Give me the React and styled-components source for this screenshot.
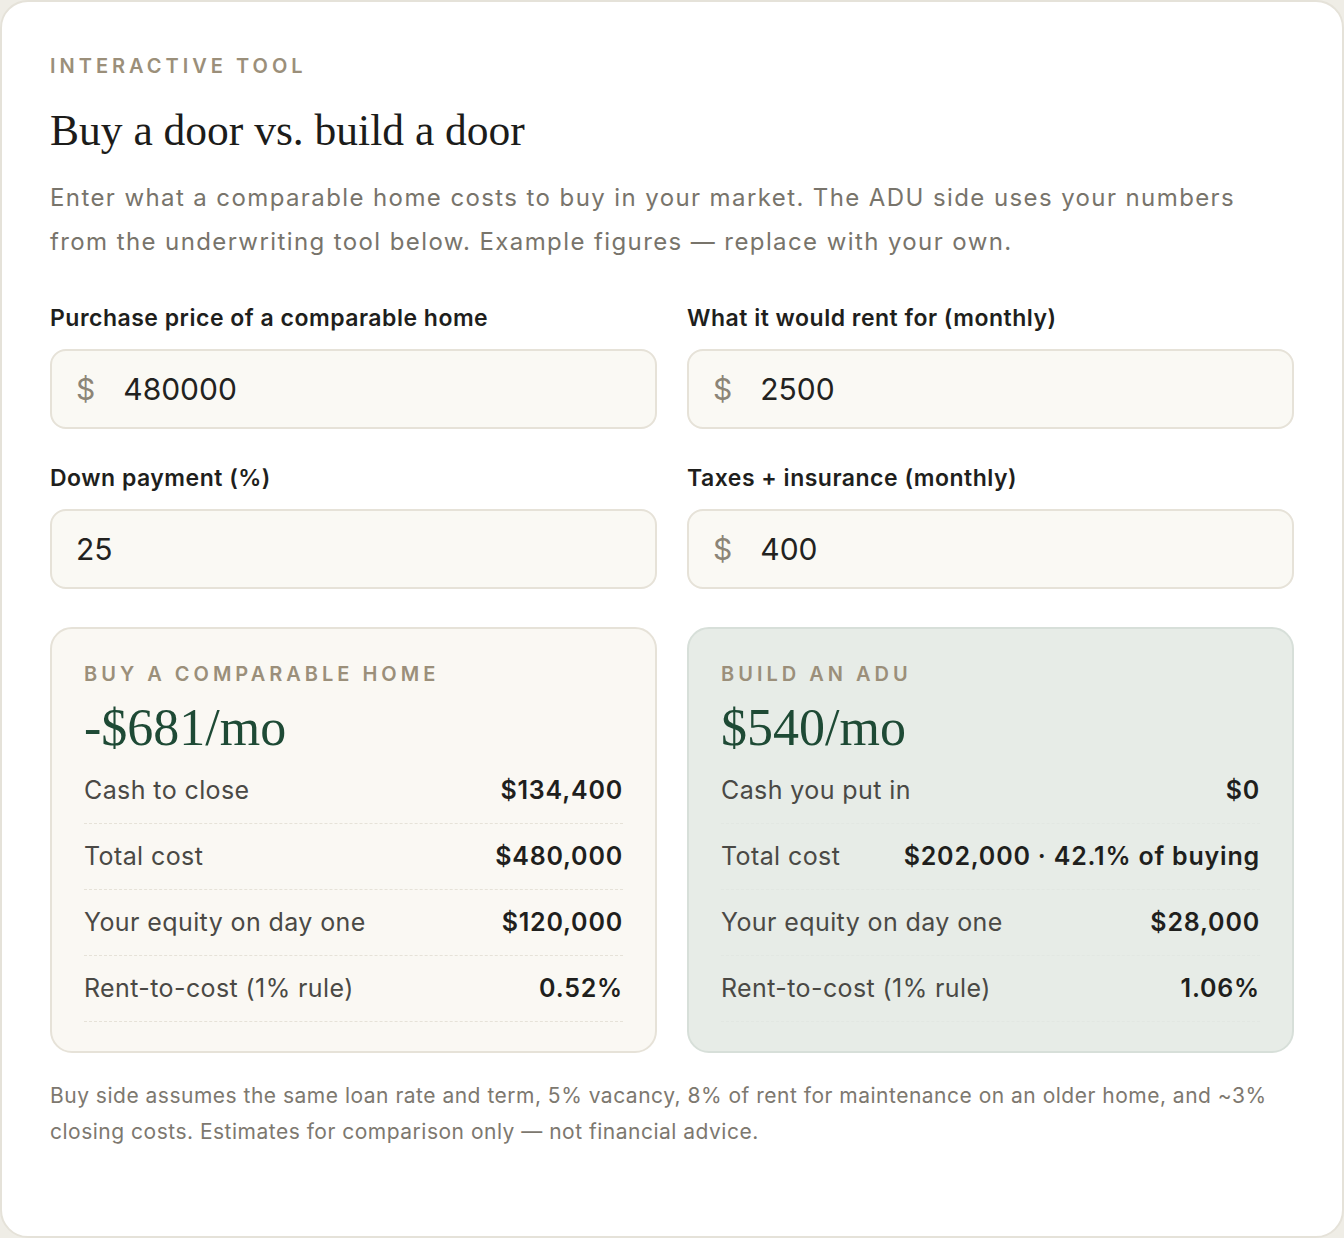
import React, { useState } from "react";
import styled, { createGlobalStyle } from "styled-components";

const GlobalStyle = createGlobalStyle`
  html, body {
    margin: 0;
    padding: 0;
    background: #efede6;
  }
  body {
    font-family: "Inter", "Noto Sans", sans-serif;
    -webkit-font-smoothing: antialiased;
  }
  * {
    box-sizing: border-box;
  }
`;

const Panel = styled.section`
  min-height: 1238px;
  background: #ffffff;
  border: 2px solid #e5e2d9;
  border-radius: 28px;
  padding: 52px 48px 60px;
`;

const Eyebrow = styled.div`
  font-size: 20px;
  line-height: 24px;
  font-weight: 600;
  letter-spacing: 4px;
  text-transform: uppercase;
  color: #9b8f7a;
`;

const Title = styled.h1`
  margin: 24px 0 0;
  font-family: "Liberation Serif", "DejaVu Serif", serif;
  font-weight: 400;
  font-size: 43.5px;
  line-height: 56px;
  color: #1c1c1a;
`;

const Lede = styled.p`
  margin: 18px 0 0;
  font-size: 24px;
  line-height: 44px;
  letter-spacing: 1.4px;
  color: #78746b;
`;

const FieldGrid = styled.div`
  display: grid;
  grid-template-columns: 1fr 1fr;
  column-gap: 30px;
  row-gap: 35px;
  margin-top: 40px;
`;

const Field = styled.label`
  display: flex;
  flex-direction: column;
  gap: 17px;
`;

const FieldLabel = styled.span`
  font-size: 23px;
  line-height: 28px;
  font-weight: 600;
  letter-spacing: 0.5px;
  color: #1f1f1d;
`;

const InputBox = styled.div`
  display: flex;
  align-items: center;
  gap: 28px;
  height: 80px;
  padding: 0 24px;
  background: #faf9f4;
  border: 2px solid #e6e2d8;
  border-radius: 16px;
`;

const Prefix = styled.span`
  font-size: 30px;
  color: #8c8577;
`;

const NumberInput = styled.input`
  flex: 1;
  min-width: 0;
  border: none;
  background: transparent;
  outline: none;
  padding: 0;
  font-family: "Inter", "Noto Sans", sans-serif;
  font-size: 30px;
  color: #222220;
`;

const Compare = styled.div`
  display: grid;
  grid-template-columns: 1fr 1fr;
  gap: 30px;
  margin-top: 38px;
`;

const Scenario = styled.div`
  background: ${(p) => (p.adu ? "#e7ece7" : "#faf8f3")};
  border: 2px solid ${(p) => (p.adu ? "#d7dfd9" : "#e6e2d8")};
  border-radius: 22px;
  padding: 33px 32px 29px;
`;

const BigNumber = styled.div`
  margin: 14px 0 2px;
  font-family: "Liberation Serif", "DejaVu Serif", serif;
  font-size: 52px;
  line-height: 56px;
  color: #1e4a35;
`;

const Row = styled.div`
  display: flex;
  justify-content: space-between;
  align-items: center;
  gap: 16px;
  height: 66px;
  padding-bottom: 1px;
  border-bottom: 1px dashed ${(p) => (p.adu ? "#e2e7e2" : "#e6e2d8")};
  font-size: 25px;
`;

const RowLabel = styled.span`
  letter-spacing: 0.4px;
  color: #4a4945;
`;

const RowValue = styled.span`
  font-weight: 600;
  letter-spacing: 0.8px;
  color: #1f1f1d;
  white-space: nowrap;
`;

const Footnote = styled.p`
  margin: 25px 0 0;
  font-size: 21px;
  line-height: 36px;
  letter-spacing: 0.5px;
  color: #7d786f;
`;

const fields = [
  { key: "price", label: "Purchase price of a comparable home", prefix: "$", value: "480000" },
  { key: "rent", label: "What it would rent for (monthly)", prefix: "$", value: "2500" },
  { key: "down", label: "Down payment (%)", value: "25" },
  { key: "taxes", label: "Taxes + insurance (monthly)", prefix: "$", value: "400" },
];

const buyRows = [
  ["Cash to close", "$134,400"],
  ["Total cost", "$480,000"],
  ["Your equity on day one", "$120,000"],
  ["Rent-to-cost (1% rule)", "0.52%"],
];

const aduRows = [
  ["Cash you put in", "$0"],
  ["Total cost", "$202,000 · 42.1% of buying"],
  ["Your equity on day one", "$28,000"],
  ["Rent-to-cost (1% rule)", "1.06%"],
];

const ScenarioCard = ({ adu, title, amount, rows }) => (
  <Scenario adu={adu}>
    <Eyebrow>{title}</Eyebrow>
    <BigNumber>{amount}</BigNumber>
    {rows.map(([label, value]) => (
      <Row key={label} adu={adu}>
        <RowLabel>{label}</RowLabel>
        <RowValue>{value}</RowValue>
      </Row>
    ))}
  </Scenario>
);

export default function App() {
  const [values, setValues] = useState(
    Object.fromEntries(fields.map((f) => [f.key, f.value]))
  );

  return (
    <>
      <GlobalStyle />
      <Panel>
        <Eyebrow>Interactive tool</Eyebrow>
        <Title>Buy a door vs. build a door</Title>
        <Lede>
          Enter what a comparable home costs to buy in your market. The ADU side uses your
          numbers from the underwriting tool below. Example figures — replace with your own.
        </Lede>

        <FieldGrid>
          {fields.map((f) => (
            <Field key={f.key}>
              <FieldLabel>{f.label}</FieldLabel>
              <InputBox>
                {f.prefix && <Prefix>{f.prefix}</Prefix>}
                <NumberInput
                  value={values[f.key]}
                  onChange={(e) => setValues({ ...values, [f.key]: e.target.value })}
                />
              </InputBox>
            </Field>
          ))}
        </FieldGrid>

        <Compare>
          <ScenarioCard title="Buy a comparable home" amount="-$681/mo" rows={buyRows} />
          <ScenarioCard adu title="Build an ADU" amount="$540/mo" rows={aduRows} />
        </Compare>

        <Footnote>
          Buy side assumes the same loan rate and term, 5% vacancy, 8% of rent for maintenance on
          an older home, and ~3% closing costs. Estimates for comparison only — not financial
          advice.
        </Footnote>
      </Panel>
    </>
  );
}
